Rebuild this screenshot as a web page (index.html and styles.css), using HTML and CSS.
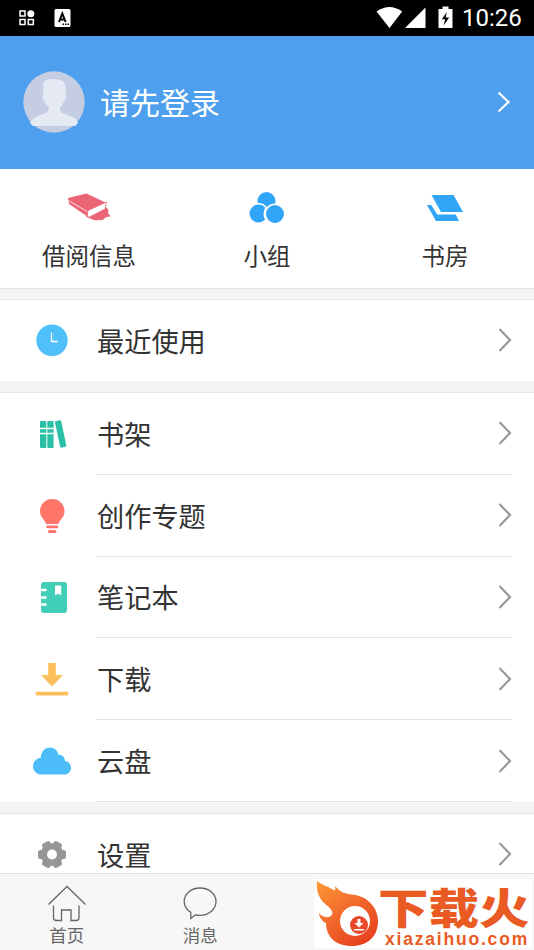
FILE: index.html
```
<!DOCTYPE html>
<html lang="zh-CN">
<head>
<meta charset="utf-8">
<title>我的</title>
<link rel="stylesheet" href="styles.css">
</head>
<body>
<div class="app">
  <div class="status">
    <svg class="status-left" width="80" height="36" viewBox="0 0 80 36">
      <g fill="none" stroke="#fff" stroke-width="1.5"><path d="M20 11h5v5h-5zM20 19.500h5v5h-5zM28.300 19.500h5v5h-5z"/></g>
      <circle cx="30.800" cy="13.700" r="3.500" fill="#fff"/>
      <rect x="54.500" y="9" width="16" height="18" rx="1.500" fill="#fff"/>
      <path d="M59 22l3.300-8.500 3.300 8.500M60.200 19.500h4.500" fill="none" stroke="#000" stroke-width="2"/>
      <path d="M62.500 24.300h7" stroke="#000" stroke-width="1.400" stroke-dasharray="1.500 1"/>
    </svg>
    <svg class="status-right" width="80" height="36" viewBox="0 0 80 36" fill="#fff">
      <path d="M1.500 11.500Q14.500 2.500 27.200 11.500L14.500 28z"/>
      <path d="M50.500 7.500V28H30z"/>
      <path d="M63.500 9h4V6.500h6V9h4v19h-14z"/>
      <path d="M71.800 12l-5 7.200h3.300l-1.400 6.300 5.400-8h-3.400z" fill="#000"/>
    </svg>
    <span class="time">10:26</span>
  </div>

  <div class="profile">
    <svg class="avatar" width="62" height="62" viewBox="0 0 62 62">
      <circle cx="31" cy="31" r="30.700" fill="#c5cde2"/>
      <path d="M20 13Q21 8 31 8t11.500 6v9c2 1 0 6-1.500 7q-1 4-4 7 0 5 5 6c8 3 11 4 13 9l-3 3h-42l-3-3c2-5 6-6 13-9q6-1 6-6-4-4-4.500-7c-2-1-3-6-1-7z" fill="#e5e9f3"/>
    </svg>
    <span class="login">请先登录</span>
    <svg class="arrow light" width="14" height="24" viewBox="0 0 14 24"><path d="M1.500 2.500l10 9.500-10 9.500"/></svg>
  </div>

  <div class="shortcuts">
    <div class="shortcut">
      <svg width="46" height="36" viewBox="0 0 46 36">
        <path d="M20 24l21-6.500 1.500 3-.5 2.500 2.500 3.500-4 .5-4 3-8 .3-8-3.300z" fill="#ec6577"/>
        <path d="M2 8L20.500 3.500l20 9.500L22 27 3 14z" fill="#ec6577"/>
        <path d="M22 20.500L40.500 12l-1.300 7L22.500 27.500q-2-3-.5-7z" fill="#fff" stroke="#ec6577" stroke-width=".8"/>
        <path d="M2.500 10.500L21 21.500" stroke="#fff" stroke-width=".8" fill="none"/>
      </svg>
      <span>借阅信息</span>
    </div>
    <div class="shortcut">
      <svg width="36" height="36" viewBox="0 0 36 36" fill="#31a5f8">
        <circle cx="17.500" cy="11" r="9"/>
        <circle cx="26" cy="24" r="9.800" stroke="#fff" stroke-width="1.600"/>
        <path d="M15.500 31.200A9.800 9.800 0 1 1 17.200 17.500Q13.500 24 17 29.500z" stroke="#fff" stroke-width="1.600"/>
      </svg>
      <span>小组</span>
    </div>
    <div class="shortcut">
      <svg width="36" height="36" viewBox="0 0 36 36" fill="#31a5f8">
        <path d="M4.500 5h22l9.500 17H14z"/><path d="M0 15h4.200l6 9.500h18.500L32 31H9z"/>
      </svg>
      <span>书房</span>
    </div>
  </div>

  <div class="group recent">
    <div class="row">
      <svg class="icon" viewBox="0 0 40 40"><circle cx="20" cy="20.300" r="15.700" fill="#50c0fa"/><path d="M19.500 12.500v9H26" fill="none" stroke="#fff" stroke-width="1.300"/></svg>
      <div class="cell"><span>最近使用</span><svg class="arrow" width="14" height="24" viewBox="0 0 14 24"><path d="M1.500 1l10.500 11-10.500 11"/></svg></div>
    </div>
  </div>

  <div class="group tools">
    <div class="row">
      <svg class="icon" viewBox="0 0 40 40" fill="#2bbfa5"><rect x="8" y="7" width="6.300" height="27" rx="1"/><rect x="15.300" y="7" width="6.300" height="27" rx="1"/><rect x="25.500" y="6.500" width="6.300" height="27" rx="1" transform="rotate(-12 28.600 20)"/><path d="M8 14.500h13.700M8 19.500h13.700" stroke="#fff" stroke-width="1.700"/></svg>
      <div class="cell"><span>书架</span><svg class="arrow" width="14" height="24" viewBox="0 0 14 24"><path d="M1.500 1l10.500 11-10.500 11"/></svg></div>
    </div>
    <div class="row">
      <svg class="icon" viewBox="0 0 40 40" fill="#ff7569"><path d="M20.300 3C13 3 8 8.500 8 15.500c0 6 5 8 6 12.500h12.500c1-4.500 6-6.500 6-12.500C32.500 8.500 27.500 3 20.300 3z"/><rect x="14.200" y="29.500" width="12" height="2.800" rx="1.400"/><rect x="16" y="34" width="8.500" height="3" rx="1.500"/></svg>
      <div class="cell"><span>创作专题</span><svg class="arrow" width="14" height="24" viewBox="0 0 14 24"><path d="M1.500 1l10.500 11-10.500 11"/></svg></div>
    </div>
    <div class="row">
      <svg class="icon" viewBox="0 0 40 40"><rect x="9" y="5" width="26" height="31" rx="3" fill="#42cfb8"/><path d="M8 13h5.500M8 20.500h5.500M8 27.500h5.500" stroke="#fff" stroke-width="2.600" stroke-linecap="round"/><path d="M23 8.500h6.200v10l-3.100-2-3.100 2z" fill="#fff"/></svg>
      <div class="cell"><span>笔记本</span><svg class="arrow" width="14" height="24" viewBox="0 0 14 24"><path d="M1.500 1l10.500 11-10.500 11"/></svg></div>
    </div>
    <div class="row">
      <svg class="icon" viewBox="0 0 40 40" fill="#fbbf5b"><path d="M16.200 4h7.600v12h7.200L20 27.500 9 16h7.200zM3.700 32.800h32.500v3.600H3.700z"/></svg>
      <div class="cell"><span>下载</span><svg class="arrow" width="14" height="24" viewBox="0 0 14 24"><path d="M1.500 1l10.500 11-10.500 11"/></svg></div>
    </div>
    <div class="row">
      <svg class="icon" viewBox="0 0 40 40" fill="#4cbdf9"><path d="M9.500 33.500C4.500 33.500 1 29.700 1 25.200c0-4.300 3.200-7.900 7.700-8.400C9 10.500 13 6.500 18 6.500c4.200 0 7.500 3 8.500 7.300 3.500-.2 6.200 2 6.500 6.300 3.500.2 6 3.200 6 6.600 0 3.800-2.800 6.800-6.500 6.800z"/></svg>
      <div class="cell"><span>云盘</span><svg class="arrow" width="14" height="24" viewBox="0 0 14 24"><path d="M1.500 1l10.500 11-10.500 11"/></svg></div>
    </div>
  </div>

  <div class="group settings">
    <div class="row">
      <svg class="icon" viewBox="0 0 40 40"><g fill="#969696"><circle cx="20" cy="20.500" r="11.300"/><rect x="6" y="16" width="28" height="9" rx="2.500"/><rect x="6" y="16" width="28" height="9" rx="2.500" transform="rotate(60 20 20.500)"/><rect x="6" y="16" width="28" height="9" rx="2.500" transform="rotate(120 20 20.500)"/></g><circle cx="20" cy="20.500" r="5" fill="#fff"/></svg>
      <div class="cell"><span>设置</span><svg class="arrow" width="14" height="24" viewBox="0 0 14 24"><path d="M1.500 1l10.500 11-10.500 11"/></svg></div>
    </div>
  </div>

  <div class="tabs">
    <div class="tab">
      <svg width="40" height="40" viewBox="0 0 40 40"><path d="M1.500 21.500L20 3.500l18.500 18M6.500 22.500v12.200q0 2.800 2.800 2.800h5.200V27h9.500v10.500h5.200q2.800 0 2.800-2.800V22.500"/></svg>
      <span>首页</span>
    </div>
    <div class="tab">
      <svg width="40" height="40" viewBox="0 0 40 40"><path d="M20 5C11 5 4.200 11 4.200 18.500c0 4.500 2.300 8.200 6.600 10.800v6.200l4.700-3.700q2 .5 4.500.5c9 0 16-6.200 16-13.800S29 5 20 5z"/></svg>
      <span>消息</span>
    </div>
  </div>

  <div class="watermark">
    <span class="glow"></span>
    <svg class="flame" width="64" height="69" viewBox="0 0 64 69">
      <defs><linearGradient id="fire" x1="0" y1="0" x2=".7" y2="1"><stop offset="0" stop-color="#fa9a35"/><stop offset=".5" stop-color="#f36b2d"/><stop offset="1" stop-color="#e7431f"/></linearGradient></defs>
      <path d="M3 2c5 4 10 5 15 8 3 2 4 2 3-3 5 6 10 8 20 9C54 18 64 29 64 42 64 58 53 67 38 67 22 67 12 58 12 44c-4-2-7-6-7-10 3 4 9 6 13 2 2-4-3-8-8-12C5 19 2 12 3 2z" fill="url(#fire)"/>
      <circle cx="41" cy="42" r="15" fill="#fff"/><circle cx="45" cy="46" r="9" fill="#e9482a"/>
      <path d="M43.500 40h3v4h3L45 48.500 40.500 44h3zM40 50h10v1.500H40z" fill="#fff"/>
    </svg>
    <div class="brand"><span class="brand-name">下载火</span><span class="brand-url">xiazaihuo.com</span></div>
  </div>
</div>
</body>
</html>
```
FILE: styles.css
```
* { box-sizing: border-box; }
body { margin: 0; font-family: "Noto Sans CJK SC", sans-serif; color: #333; background: #f3f4f6; }
.app { position: relative; width: 534px; height: 950px; overflow: hidden; display: flex; flex-direction: column; }
.app > * { flex-shrink: 0; }
svg { display: block; flex-shrink: 0; }

.status { height: 36px; background: #000; display: flex; align-items: center; }
.status-right { margin-left: auto; }
.time { width: 79px; padding-left: 7px; font: 400 24px/36px Roboto, sans-serif; color: #fff; }

.profile { height: 133px; background: #4e9fed; display: flex; align-items: center; padding: 0 23px 1px 23px; }
.login { margin-left: 15px; padding-bottom: 2px; font-size: 30px; line-height: 44px; color: #fff; }
.arrow { margin-left: auto; fill: none; stroke: #999; stroke-width: 2.2; }
.arrow.light { stroke: #fff; }

.shortcuts { height: 120px; background: #fff; border-bottom: 1px solid #e0e3e6; display: grid; grid-template-columns: repeat(3, 1fr); padding-top: 21px; }
.shortcut { display: flex; flex-direction: column; align-items: center; gap: 11px; font-size: 23.5px; line-height: 36px; }

.group { background: #fff; border-top: 1px solid #e6e8ea; }
.recent { margin-top: 10px; height: 82px; }
.tools { margin-top: 11px; height: 410px; }
.settings { margin-top: 11px; height: 60px; }
.row { height: 81.800px; display: flex; align-items: center; padding-left: 32px; }
.recent .row { height: 80px; }
.settings .row { height: 80px; }
.icon { width: 40px; height: 40px; }
.cell { flex: 1; height: 100%; margin: 0 22px 0 24px; display: flex; align-items: center; font-size: 27.200px; line-height: 40px; border-bottom: 1px solid #e2e2e2; padding-left: 1px; }
.cell span { padding-bottom: 1px; }
.recent .cell, .settings .cell { border-bottom: 0; }

.tabs { position: relative; height: 77px; background: #f7f7f7; border-top: 1px solid #e1e1e1; display: grid; grid-template-columns: repeat(4, 1fr); padding-top: 9px; }
.tab { display: flex; flex-direction: column; align-items: center; font-size: 17.500px; line-height: 24px; color: #666; }
.tab svg { fill: none; stroke: #666; stroke-width: 1.3; }

.watermark { position: absolute; left: 314px; top: 879px; width: 218px; height: 69px; background: #fff; display: flex; }
.brand { position: relative; display: flex; flex-direction: column; color: #ea5b24; }
.brand-name { height: 52px; font-size: 50.500px; font-weight: 900; line-height: 62px; white-space: nowrap; transform: scaleY(.84); transform-origin: 0 0; }
.brand-url { margin-left: 7px; font: bold 17.500px/17px "Liberation Sans", sans-serif; letter-spacing: 1.8px; white-space: nowrap; }
.glow { position: absolute; left: 143px; top: 8px; width: 20px; height: 34px; border-radius: 50%; background: #4cbdf9; opacity: .12; }
```
